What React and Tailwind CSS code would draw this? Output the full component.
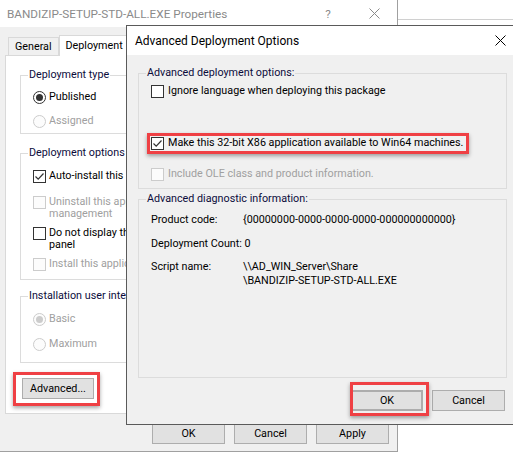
import React from 'react';

const font = { fontFamily: 'Roboto, "Noto Sans", sans-serif' };

function Check({ checked, disabled }) {
  return (
    <span
      className={`inline-flex w-[13px] h-[13px] shrink-0 items-center justify-center border ${
        disabled ? 'border-[#cccccc] bg-[#fcfcfc]' : 'border-[#333333] bg-white'
      }`}
    >
      {checked && (
        <svg width="11" height="11" viewBox="0 0 11 11">
          <path d="M1.5 5.5 L4.2 8.2 L9.5 2.5" fill="none" stroke="#333" strokeWidth="1.2" />
        </svg>
      )}
    </span>
  );
}

function Radio({ checked, disabled }) {
  return (
    <span
      className={`inline-flex w-[13px] h-[13px] shrink-0 items-center justify-center rounded-full border ${
        disabled ? 'border-[#cccccc] bg-[#fcfcfc]' : 'border-[#333333] bg-white'
      }`}
    >
      {checked && (
        <span className={`w-[7px] h-[7px] rounded-full ${disabled ? 'bg-[#cccccc]' : 'bg-[#333333]'}`} />
      )}
    </span>
  );
}

function Group({ label, className = '', children }) {
  return (
    <fieldset className={`border border-[#dcdcdc] ${className}`}>
      <legend className="ml-[7px] px-[1px] leading-[14px] whitespace-nowrap text-[#0c0c3c]">{label}</legend>
      {children}
    </fieldset>
  );
}

function Button({ children, className = '' }) {
  return (
    <div
      className={`flex items-center justify-center h-[21px] border border-[#adadad] bg-[#e1e1e1] text-black ${className}`}
    >
      {children}
    </div>
  );
}

function CloseX({ color = '#000' }) {
  return (
    <svg width="11" height="11" viewBox="0 0 11 11">
      <path d="M0.5 0.5 L10.5 10.5 M10.5 0.5 L0.5 10.5" stroke={color} strokeWidth="1" />
    </svg>
  );
}

function PropertiesWindow() {
  return (
    <div className="absolute left-0 top-0 w-[398px] h-[452px] flex flex-col border-r border-b border-[#a0a0a0] bg-[#f0f0f0]">
      <div className="h-[27px] shrink-0 flex items-center bg-white pl-[7px] text-[#8a8a8a] text-[11.75px]">
        <span className="flex-1 whitespace-nowrap">BANDIZIP-SETUP-STD-ALL.EXE Properties</span>
        <span className="w-[20px] text-center mr-[26px]">?</span>
        <span className="w-[20px] flex justify-center mr-[13px]">
          <CloseX color="#8a8a8a" />
        </span>
      </div>
      <div className="flex items-end h-[28px] pl-[8px]">
        <div className="h-[18px] px-[6px] flex items-center border border-b-0 border-[#d9d9d9] bg-[#f0f0f0]">General</div>
        <div className="h-[21px] w-[70px] px-[6px] flex items-center border border-b-0 border-[#d9d9d9] bg-white relative top-[1px]">Deployment</div>
      </div>
      {/* the dialog covers everything right of x=126, so group rows are clipped there */}
      <div className="ml-[5px] w-[388px] h-[359px] border border-[#d9d9d9] bg-white px-[14px] pt-[12px] whitespace-nowrap">
        <Group label="Deployment type" className="h-[66px]">
          <div className="w-[105px] overflow-hidden flex flex-col gap-[10px] pl-[12px] pt-[8px]">
            <label className="flex items-center gap-[3px]"><Radio checked />Published</label>
            <label className="flex items-center gap-[3px] text-[#a0a0a0]"><Radio disabled />Assigned</label>
          </div>
        </Group>
        <Group label="Deployment options" className="mt-[12px] h-[134px]">
          <div className="w-[105px] overflow-hidden flex flex-col pl-[12px] pt-[9px]">
            <label className="flex items-center gap-[3px]"><Check checked />Auto-install this application by file extension activation</label>
            <label className="mt-[13px] flex items-start gap-[3px] text-[#a0a0a0] leading-[12px]">
              <Check disabled />
              <span>Uninstall this application when it falls out of the scope of<br />management</span>
            </label>
            <label className="mt-[7px] flex items-start gap-[3px] leading-[12px]">
              <Check />
              <span>Do not display this package in the Add/Remove Programs control<br />panel</span>
            </label>
            <label className="mt-[6px] flex items-center gap-[3px] text-[#a0a0a0]"><Check disabled />Install this application at logon</label>
          </div>
        </Group>
        <Group label="Installation user interface options" className="mt-[9px] h-[74px]">
          <div className="w-[105px] overflow-hidden flex flex-col gap-[11px] pl-[12px] pt-[9px]">
            <label className="flex items-center gap-[3px] text-[#a0a0a0]"><Radio checked disabled />Basic</label>
            <label className="flex items-center gap-[3px] text-[#a0a0a0]"><Radio disabled />Maximum</label>
          </div>
        </Group>
        <Button className="mt-[15px] ml-[2px] w-[72px]">Advanced...</Button>
      </div>
      <div className="flex justify-end gap-[9px] pr-[8px] mt-[9px]">
        <Button className="w-[73px]">OK</Button>
        <Button className="w-[73px]">Cancel</Button>
        <Button className="w-[73px]">Apply</Button>
      </div>
    </div>
  );
}

function AdvancedDialog() {
  return (
    <div className="absolute left-[126px] top-[25px] w-[400px] h-[400px] flex flex-col border border-[#5a5a5a] bg-[#f0f0f0] whitespace-nowrap">
      <div className="h-[29px] shrink-0 flex items-center bg-white pl-[8px] text-[12px] text-black">
        <span className="flex-1">Advanced Deployment Options</span>
        <span className="w-[20px] flex justify-center mr-[15px]">
          <CloseX />
        </span>
      </div>
      <div className="pl-[11px] pr-[18px] pt-[11px]">
        <Group label="Advanced deployment options:" className="h-[123px]">
          <div className="flex flex-col pl-[12px] pt-[4px]">
            <label className="flex items-center gap-[4px]"><Check />Ignore language when deploying this package</label>
            <label className="mt-[38px] flex items-center gap-[4px]"><Check checked />Make this 32-bit X86 application available to Win64 machines.</label>
            <label className="mt-[17px] flex items-center gap-[4px] text-[#a0a0a0]"><Check disabled />Include OLE class and product information.</label>
          </div>
        </Group>
        <Group label="Advanced diagnostic information:" className="mt-[3px] h-[186px]">
          <div className="grid grid-cols-[92px_1fr] gap-y-[10px] pl-[12px] pt-[7px]">
            <span>Product code:</span>
            <span>{'{00000000-0000-0000-0000-000000000000}'}</span>
            <span className="col-span-2">Deployment Count: 0</span>
            <span className="-mt-[1px]">Script name:</span>
            <span className="-mt-[1px]">\\AD_WIN_Server\Share<br />\BANDIZIP-SETUP-STD-ALL.EXE</span>
          </div>
        </Group>
        <div className="flex justify-end gap-[9px] mt-[12px] pr-[2px]">
          <Button className="w-[72px] border-2 border-[#0078d7]">OK</Button>
          <Button className="w-[73px]">Cancel</Button>
        </div>
      </div>
    </div>
  );
}

function Highlight({ className }) {
  return (
    <div
      className={`absolute border-[3px] border-[#ef4044] shadow-[0_2px_4px_rgba(0,0,0,0.35)] pointer-events-none ${className}`}
    />
  );
}

export default function App() {
  return (
    <div className="relative w-[513px] h-[452px] overflow-hidden bg-white text-[10.75px] leading-[14px] text-black" style={font}>
      <div className="absolute left-[398px] top-[19px] w-[115px] border-t border-[#d0d0d0]" />
      <PropertiesWindow />
      <AdvancedDialog />
      <Highlight className="left-[13px] top-[372px] w-[87px] h-[34px]" />
      <Highlight className="left-[147px] top-[133px] w-[322px] h-[21px]" />
      <Highlight className="left-[350px] top-[382px] w-[79px] h-[34px]" />
    </div>
  );
}
